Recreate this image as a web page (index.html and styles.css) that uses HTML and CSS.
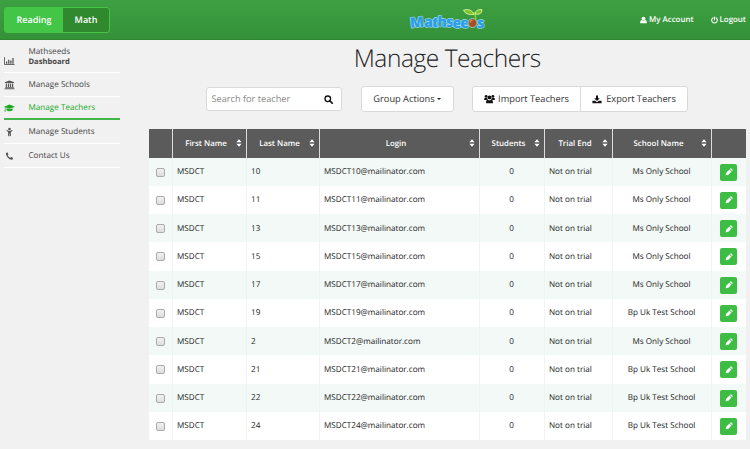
FILE: index.html
```
<!DOCTYPE html>
<html lang="en">
<head>
<meta charset="utf-8">
<title>Manage Teachers</title>
<link rel="stylesheet" href="styles.css">
</head>
<body>
<svg class="defs" aria-hidden="true">
  <symbol id="pencil" viewBox="0 0 10 10"><path d="M.8 9.200l.5-3.100L5.500 1.900l2.600 2.600L3.900 8.700zM6.100 1.400l.9-.8q.5-.4 1 .1l1.400 1.400q.4.4.1.9l-.8.900z"/></symbol>
  <symbol id="sort" viewBox="0 0 6 8"><path d="M.4 3.300L3 .3l2.600 3zM.4 4.700h5.200L3 7.700z"/></symbol>
</svg>
<header class="topbar">
  <div class="switch"><a class="on">Reading</a><a>Math</a></div>
  <svg class="logo" viewBox="0 0 78 24" role="img">
    <text class="word" x="1.500 15 22.500 28 37.500 43.500 51 68" y="21 20 20 19.500 20 20.500 20.500 20.500" rotate="-6 0 6 3 -4 0 4 0">Mathsees</text>
    <path d="M66.500 14Q67.500 9 64.500 5" fill="none" stroke="#8bd32c" stroke-width="1.500"/>
    <path d="M65 7.500Q56.500 8.500 54.500 3Q62.500 1 65 7.500zM66 7Q66.500 2 73 2.500Q73 8.500 66 7z" fill="#7cc62a" stroke="#d6eea0" stroke-width=".9"/>
    <circle cx="63.500" cy="16" r="4.500" fill="#a9501c" stroke="#8fc9dd" stroke-width="1"/>
    <path d="M61 15.500q.5-2.300 2.500-2.500" fill="none" stroke="#e09a55" stroke-width="1.200"/>
  </svg>
  <nav class="account">
    <a><svg class="i-user" viewBox="0 0 10 10"><circle cx="5" cy="3" r="2.700"/><path d="M.3 9.500V7.800Q.5 5.300 2.800 5q2.200 1.500 4.400 0 2.300.3 2.500 2.800v1.700z"/></svg>My Account</a>
    <a><svg class="i-power" viewBox="0 0 10 10"><path d="M3 1.800a4 4 0 1 0 4 0M5 .6v4.200" fill="none" stroke="currentColor" stroke-width="1.500" stroke-linecap="round"/></svg>Logout</a>
  </nav>
</header>
<div class="page">
  <aside class="side">
    <a class="dash"><svg viewBox="0 0 12 10"><path d="M.5.800v8h11" fill="none" stroke="currentColor"/><path d="M2.200 5.500h1.400V8H2.200zM4.500 3.500h1.400V8H4.500zM6.800 4.500h1.400V8H6.800zM9.100 1.800h1.400V8H9.100z"/></svg><span>Mathseeds<b>Dashboard</b></span></a>
    <a><svg viewBox="0 0 12 10"><path d="M6 0l5 2v.9H1V2zM2 3.400h1.300v3.800H2zM4.300 3.400h1.300v3.800H4.300zM6.500 3.400h1.300v3.800H6.500zM8.800 3.400h1.300v3.800H8.800zM1.300 7.200h9.400v.9H1.300zM.7 8.600h10.600v1H.7z"/></svg><span>Manage Schools</span></a>
    <a class="current"><svg viewBox="0 0 12 10"><path d="M6 1.300L12 3.500 6 5.700 0 3.500zM2.700 5.200L6 6.400l3.400-1.200v2.200Q6 9.600 2.700 7.400zM.9 4h.6v3l.5 1.800H.4L.9 7z"/></svg><span>Manage Teachers</span></a>
    <a><svg viewBox="0 0 12 10"><circle cx="6" cy="1.700" r="1.400"/><path d="M3.200 2.700l1.600 1h2.400l1.600-1 .6.800-1.900 1.500v4.300q-.7.800-1.200 0V7h-.6v2.300q-.6.800-1.200 0V5L2.600 3.500z"/></svg><span>Manage Students</span></a>
    <a><svg viewBox="0 0 12 10"><path d="M2.100 1.700Q3.400.7 4 1.300l.8 1.700q.1.500-.9 1.200 1 1.800 2.800 2.800.8-1 1.300-.9l1.700.9q.5.500-.4 1.700Q7.500 10 4.400 7.200 1.400 4.400 2.100 1.700z"/></svg><span>Contact Us</span></a>
  </aside>
  <main>
    <h1>Manage Teachers</h1>
    <div class="tools">
      <div class="search"><span>Search for teacher</span><svg viewBox="0 0 10 10"><circle cx="4.200" cy="4.200" r="3.100" fill="none" stroke="currentColor" stroke-width="1.500"/><path d="M6.400 6.400l2.700 2.700" stroke="currentColor" stroke-width="1.800" stroke-linecap="round"/></svg></div>
      <div class="btn group">Group Actions<i class="caret"></i></div>
      <div class="pair">
        <div class="btn"><svg viewBox="0 0 12 10"><circle cx="2.300" cy="2" r="1.500"/><circle cx="9.700" cy="2" r="1.500"/><circle cx="6" cy="3.300" r="2.100"/><path d="M.2 6.200V5q.1-1.200 1.200-1.300h2.100q0 1.200 1 1.800Q3 5.500 2.500 6.200zM11.800 6.200V5q-.1-1.200-1.200-1.300H8.500q0 1.200-1 1.800 1.500 0 2 .7zM2.300 9.700V7.800Q2.500 6 4 5.700q2 1.200 4 0 1.500.3 1.700 2.100v1.900z"/></svg>Import Teachers</div>
        <div class="btn"><svg class="i-down" viewBox="0 0 12 10"><path d="M4.800.3h2.400v3.100h2.200L6 6.800 2.600 3.400h2.200zM.5 6.400h3.300L6 8.200l2.200-1.800h3.300v3.100H.5z"/></svg>Export Teachers</div>
      </div>
    </div>
    <table>
      <colgroup><col class="c1"><col class="c2"><col class="c3"><col class="c4"><col class="c5"><col class="c6"><col class="c7"><col class="c8"></colgroup>
      <thead><tr><th></th><th>First Name<svg><use href="#sort"/></svg></th><th>Last Name<svg><use href="#sort"/></svg></th><th>Login<svg><use href="#sort"/></svg></th><th>Students<svg><use href="#sort"/></svg></th><th>Trial End<svg><use href="#sort"/></svg></th><th>School Name<svg><use href="#sort"/></svg></th><th></th></tr></thead>
      <tbody>
        <tr><td><i class="check"></i></td><td>MSDCT</td><td>10</td><td>MSDCT10@mailinator.com</td><td>0</td><td>Not on trial</td><td>Ms Only School</td><td><a class="edit"><svg><use href="#pencil"/></svg></a></td></tr>
        <tr><td><i class="check"></i></td><td>MSDCT</td><td>11</td><td>MSDCT11@mailinator.com</td><td>0</td><td>Not on trial</td><td>Ms Only School</td><td><a class="edit"><svg><use href="#pencil"/></svg></a></td></tr>
        <tr><td><i class="check"></i></td><td>MSDCT</td><td>13</td><td>MSDCT13@mailinator.com</td><td>0</td><td>Not on trial</td><td>Ms Only School</td><td><a class="edit"><svg><use href="#pencil"/></svg></a></td></tr>
        <tr><td><i class="check"></i></td><td>MSDCT</td><td>15</td><td>MSDCT15@mailinator.com</td><td>0</td><td>Not on trial</td><td>Ms Only School</td><td><a class="edit"><svg><use href="#pencil"/></svg></a></td></tr>
        <tr><td><i class="check"></i></td><td>MSDCT</td><td>17</td><td>MSDCT17@mailinator.com</td><td>0</td><td>Not on trial</td><td>Ms Only School</td><td><a class="edit"><svg><use href="#pencil"/></svg></a></td></tr>
        <tr><td><i class="check"></i></td><td>MSDCT</td><td>19</td><td>MSDCT19@mailinator.com</td><td>0</td><td>Not on trial</td><td>Bp Uk Test School</td><td><a class="edit"><svg><use href="#pencil"/></svg></a></td></tr>
        <tr><td><i class="check"></i></td><td>MSDCT</td><td>2</td><td>MSDCT2@mailinator.com</td><td>0</td><td>Not on trial</td><td>Ms Only School</td><td><a class="edit"><svg><use href="#pencil"/></svg></a></td></tr>
        <tr><td><i class="check"></i></td><td>MSDCT</td><td>21</td><td>MSDCT21@mailinator.com</td><td>0</td><td>Not on trial</td><td>Bp Uk Test School</td><td><a class="edit"><svg><use href="#pencil"/></svg></a></td></tr>
        <tr><td><i class="check"></i></td><td>MSDCT</td><td>22</td><td>MSDCT22@mailinator.com</td><td>0</td><td>Not on trial</td><td>Bp Uk Test School</td><td><a class="edit"><svg><use href="#pencil"/></svg></a></td></tr>
        <tr><td><i class="check"></i></td><td>MSDCT</td><td>24</td><td>MSDCT24@mailinator.com</td><td>0</td><td>Not on trial</td><td>Bp Uk Test School</td><td><a class="edit"><svg><use href="#pencil"/></svg></a></td></tr>
      </tbody>
    </table>
  </main>
</div>
</body>
</html>
```
FILE: styles.css
```
* { box-sizing: border-box; }
body { margin: 0; width: 750px; height: 449px; overflow: hidden; background: #f1f1f1; color: #333; font: 8.150px/12px "Open Sans", sans-serif; text-rendering: geometricPrecision; }
svg { fill: currentColor; display: block; flex: none; }
.defs { width: 0; height: 0; position: absolute; }

.topbar { height: 40px; display: flex; align-items: center; background: linear-gradient(#3da042, #349138); border-bottom: 1px solid #2d8732; color: #fff; padding: 0 4px; }
.switch { display: flex; width: 106px; height: 26px; border: 1px solid #43c648; border-radius: 3px; font-size: 9px; font-weight: 600; line-height: 24px; text-align: center; background: #30892f; }
.switch a { flex: 1; }
.switch .on { flex: none; width: 58px; background: #43c648; }
.logo { width: 78px; height: 24px; margin: -2px 0 0 299px; overflow: visible; }
.word { font-family: "Open Sans", sans-serif; font-size: 14.500px; font-weight: 800; fill: #2b9fe6; stroke: #aedff8; stroke-width: 1.100px; paint-order: stroke; stroke-linejoin: round; }
.account { margin-left: auto; display: flex; gap: 17px; font-size: 7.900px; font-weight: 600; }
.account a { display: flex; align-items: center; gap: 2px; white-space: nowrap; }
.i-user, .i-power { width: 7px; height: 8px; }

.page { display: flex; }
.side { width: 116px; margin: 0 0 0 4px; flex: none; color: #444; }
.side a { display: flex; align-items: center; height: 23.700px; border-bottom: 1px solid #fff; }
.side span { padding-top: 1px; }
.side svg { width: 11px; height: 10px; margin: 1px 13.500px 0 0; color: #555; }
.side .dash { height: 33px; line-height: 11px; }
.side .dash svg { margin-top: 10px; }
.side b { display: block; font-size: 7.600px; }
.side .current { color: #17a81d; border-bottom: 2px solid #43b649; }
.side .current svg { color: #17a81d; }

main { margin-left: 28.500px; width: 597.500px; }
h1 { margin: 3px 0 0; font-size: 24.500px; letter-spacing: -.45px; line-height: 32px; font-weight: 300; text-align: center; color: #222; }
.tools { display: flex; align-items: center; margin: 11px 0 0 57px; height: 26px; }
.search, .btn { display: flex; align-items: center; background: #fff; border: 1px solid #d9d9d9; border-radius: 3px; white-space: nowrap; }
.search { width: 136px; height: 24px; padding: 0 8px 0 5px; justify-content: space-between; font-size: 9.200px; color: #888; }
.search svg { width: 9px; height: 9px; color: #111; }
.btn { height: 26px; font-size: 9.250px; justify-content: center; }
.group { width: 93px; margin-left: 19px; }
.caret { border: 2.500px solid transparent; border-top-color: #222; border-bottom: 0; margin-left: 2px; }
.pair { display: flex; margin-left: 18.500px; }
.pair .btn { width: 109px; border-radius: 3px 0 0 3px; }
.pair .btn + .btn { width: 108px; margin-left: -1px; border-radius: 0 3px 3px 0; }
.pair svg { width: 11px; height: 10px; margin-right: 3px; color: #111; }
.pair .i-down { width: 10px; height: 9px; margin-right: 4px; }

table { width: 597.500px; margin-top: 16.500px; table-layout: fixed; border-collapse: separate; border-spacing: 0; }
.c1 { width: 24px; } .c2 { width: 74px; } .c3 { width: 73px; } .c4 { width: 160px; } .c5 { width: 65px; } .c6 { width: 68px; } .c7 { width: 99px; } .c8 { width: 34.500px; }
th { position: relative; height: 29px; padding: 1px 6px 0 0; background: #5b5b5b; border-right: 1px solid #ddd; color: #fff; font-size: 7.900px; font-weight: 600; text-align: center; }
th svg { position: absolute; right: 4px; top: 10.500px; width: 6px; height: 8px; }
th:last-child, td:last-child { border-right: 0; }
td { height: 28.250px; padding: 1px 0 0 4.500px; border-right: 1px solid #eef4f2; background: #fff; font-size: 8.150px; color: #222; white-space: nowrap; }
tbody tr:nth-child(odd) td { background: #f2f9f6; }
td:nth-child(1), td:nth-child(5), td:nth-child(7), td:nth-child(8) { padding: 1px 0 0; text-align: center; }
.check { display: block; width: 9px; height: 9px; margin: 0 auto; border: 1px solid #aaa; border-radius: 2px; background: linear-gradient(#f2f2f2, #ddd); }
.edit { display: flex; width: 17px; height: 17px; margin: 0 auto; align-items: center; justify-content: center; border-radius: 2px; background: #3dbd43; color: #fff; }
.edit svg { width: 8px; height: 8px; }
.edit use, th use { width: 100%; height: 100%; }
```
